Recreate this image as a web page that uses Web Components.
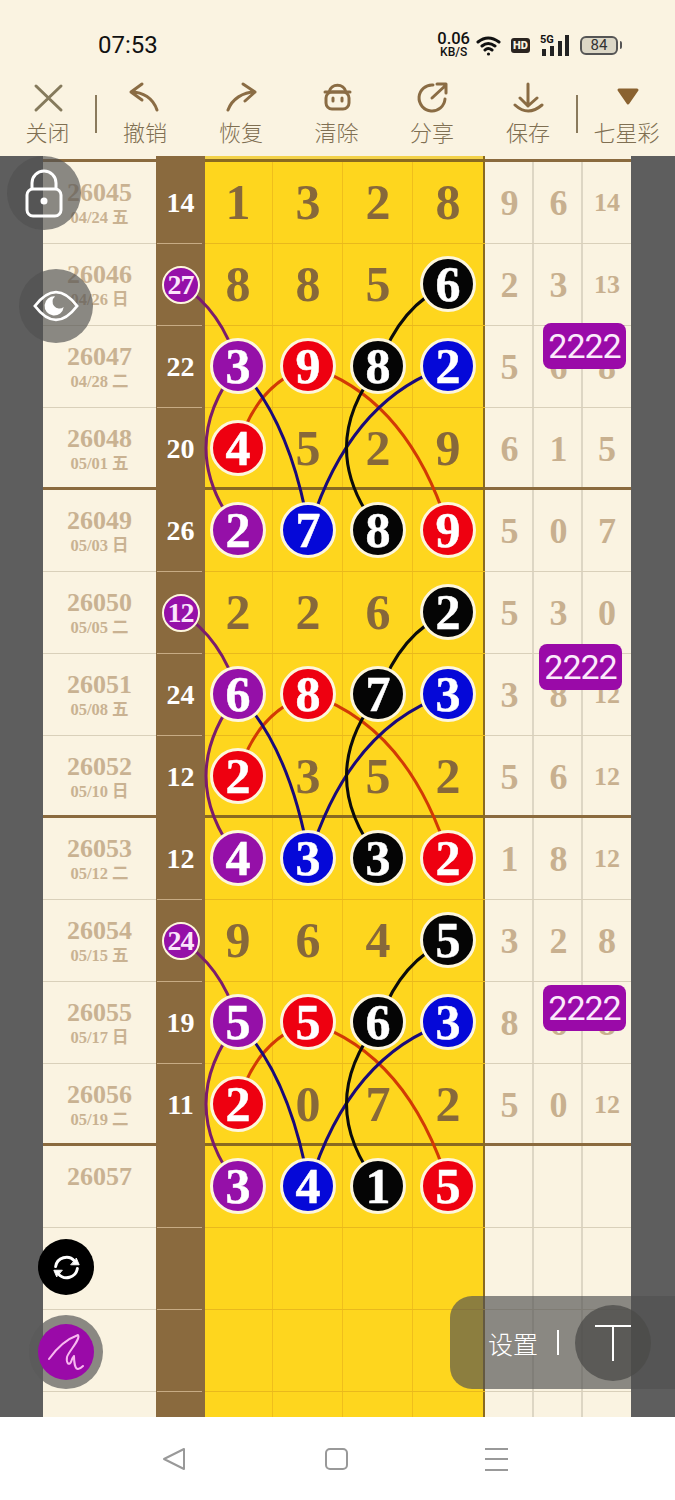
<!DOCTYPE html>
<html lang="zh">
<head>
<meta charset="utf-8">
<title>七星彩</title>
<style>
    html, body { margin: 0; padding: 0; }
    body {
        width: 675px;
        height: 1500px;
        overflow: hidden;
        display: flex;
        flex-direction: column;
        background: #faf3e1;
        font-family: "Noto Sans CJK SC", "Noto Sans", sans-serif;
    }
</style>
</head>
<body>
    <status-bar></status-bar>
    <tool-bar>
        <tool-item label="关闭">
            <svg width="40" height="36" viewBox="0 0 40 36" fill="none" stroke="#857a5c" stroke-width="3" stroke-linecap="round"><path d="M8 6 L33 30 M33 6 L8 30"/></svg>
        </tool-item>
        <tool-rule></tool-rule>
        <tool-item label="撤销">
            <svg width="40" height="36" viewBox="0 0 40 36" fill="none" stroke="#8a6c44" stroke-width="3" stroke-linecap="round" stroke-linejoin="round"><path d="M17 4 L6 12 L17 20 M6 12 C18 12 28 18 32 30"/></svg>
        </tool-item>
        <tool-item label="恢复">
            <svg width="40" height="36" viewBox="0 0 40 36" fill="none" stroke="#8a6c44" stroke-width="3" stroke-linecap="round" stroke-linejoin="round"><path d="M22 4 L34 12 L24 21 M34 12 C22 12 11 19 7 30"/></svg>
        </tool-item>
        <tool-item label="清除">
            <svg width="40" height="36" viewBox="0 0 40 36" fill="none" stroke="#8a6c44" stroke-width="3" stroke-linecap="round"><rect x="9" y="12" width="23" height="17" rx="6"/><path d="M8 12 H33 M12 12 C14 3 27 3 29 12 M16 18 V21 M25 18 V21"/></svg>
        </tool-item>
        <tool-item label="分享">
            <svg width="40" height="36" viewBox="0 0 40 36" fill="none" stroke="#8a6c44" stroke-width="3" stroke-linecap="round" stroke-linejoin="round"><path d="M21 5 A13 13 0 1 0 33 19 M20 18 L34 5 M25 4 H34 V13"/></svg>
        </tool-item>
        <tool-item label="保存">
            <svg width="40" height="36" viewBox="0 0 40 36" fill="none" stroke="#8a6c44" stroke-width="3" stroke-linecap="round" stroke-linejoin="round"><path d="M20 4 V26 M12 18 L20 26 L29 18 M7 25 Q20 37 34 25"/></svg>
        </tool-item>
        <tool-rule></tool-rule>
        <tool-item label="七星彩">
            <svg width="40" height="36" viewBox="0 0 40 36"><path d="M12 10 H30 L21 23 Z" fill="#8a6230" stroke="#8a6230" stroke-width="3" stroke-linejoin="round"/></svg>
        </tool-item>
    </tool-bar>
    <draw-board></draw-board>
    <nav-bar></nav-bar>

<script>
class StatusBar extends HTMLElement {
    constructor() {
        super();
        this.attachShadow({ mode: "open" }).innerHTML = `
            <style>
                :host {
                    display: flex;
                    align-items: center;
                    height: 30px;
                    padding: 30px 53px 15px 98px;
                    font-family: Roboto, "Liberation Sans", sans-serif;
                    color: #111;
                }
                .time { font-size: 24px; margin-right: auto; }
                .speed { display: flex; flex-direction: column; align-items: center; margin-right: 6px; }
                .speed b { font-size: 16.5px; line-height: 14px; font-weight: 500; }
                .speed span { font-size: 12px; line-height: 12px; font-weight: 500; }
                .hd {
                    width: 19px; height: 15px; margin: 0 10px 0 9px;
                    background: #2a2420; color: #faf3e1; border-radius: 3px;
                    font-size: 11px; font-weight: 900; line-height: 15px; text-align: center;
                }
                .net { position: relative; width: 29px; height: 21px; margin-right: 11px; }
                .net span { position: absolute; left: 0; top: -1px; font-size: 11px; line-height: 11px; font-weight: 700; }
                .battery {
                    width: 34px; height: 15px;
                    border: 2px solid #555; border-radius: 6px;
                    background: #dcd7c6; color: #333;
                    font-size: 15px; line-height: 15px; text-align: center;
                }
                .nub { width: 2px; height: 8px; background: #555; margin-left: 2px; border-radius: 0 2px 2px 0; }
            </style>
            <span class="time">07:53</span>
            <span class="speed"><b>0.06</b><span>KB/S</span></span>
            <svg width="26" height="21" viewBox="0 0 26 21" fill="none" stroke="#111" stroke-width="3" stroke-linecap="round">
                <path d="M2 7 Q12 -1 23 7 M6 11 Q12 6 19 11 M9 15 Q12 12 16 15"/>
                <circle cx="12.5" cy="19" r="1.6" fill="#111" stroke="none"/>
            </svg>
            <span class="hd">HD</span>
            <span class="net">
                <span>5G</span>
                <svg width="29" height="21" viewBox="0 0 29 21" fill="#222">
                    <rect x="2" y="14" width="4" height="7"/><rect x="10" y="11" width="4" height="10"/>
                    <rect x="18" y="6" width="4" height="15"/><rect x="25" y="0" width="4" height="21"/>
                </svg>
            </span>
            <span class="battery">84</span>
            <span class="nub"></span>
        `;
    }
}

class ToolBar extends HTMLElement {
    constructor() {
        super();
        this.attachShadow({ mode: "open" }).innerHTML = `
            <style>
                :host {
                    display: grid;
                    grid-template-columns: 95px 2px 96px 96px 95px 96px 96px 2px 97px;
                    height: 81px;
                }
            </style>
            <slot></slot>
        `;
    }
}

class ToolItem extends HTMLElement {
    constructor() {
        super();
        this.attachShadow({ mode: "open" }).innerHTML = `
            <style>
                :host {
                    display: flex;
                    flex-direction: column;
                    align-items: center;
                    padding-top: 5px;
                    color: #7f6f52;
                    font-size: 22px;
                    font-weight: 300;
                    white-space: nowrap;
                }
                .label { line-height: 32px; margin-top: -1px; }
                ::slotted(svg) { display: block; }
            </style>
            <slot></slot>
            <span class="label">${this.getAttribute("label")}</span>
        `;
    }
}

class ToolRule extends HTMLElement {
    constructor() {
        super();
        this.attachShadow({ mode: "open" }).innerHTML = `
            <style>
                :host { display: block; height: 38px; margin-top: 20px; background: #8a7a5c; }
            </style>
        `;
    }
}

class DrawBall extends HTMLElement {
    constructor() {
        super();
        const colors = { p: "#9510a8", r: "#ee0010", k: "#050505", b: "#0508d8" };
        const small = this.hasAttribute("small");
        this.attachShadow({ mode: "open" }).innerHTML = `
            <style>
                :host {
                    position: relative;
                    z-index: 2;
                    display: flex;
                    align-items: center;
                    justify-content: center;
                    box-sizing: border-box;
                    width: ${small ? 38 : 56}px;
                    height: ${small ? 38 : 56}px;
                    border: ${small ? 2 : 3}px solid #fdf6dc;
                    border-radius: 50%;
                    background: ${colors[this.getAttribute("color")]};
                    color: ${small ? "#fbe4fb" : "#fff"};
                    font-size: ${small ? 28 : 50}px;
                    letter-spacing: ${small ? -1 : 0}px;
                    font-weight: 700;
                    -webkit-text-stroke: ${small ? 0 : 0.5}px currentColor;
                }
            </style>
            <slot></slot>
        `;
    }
}

class DrawRow extends HTMLElement {
    constructor() {
        super();
        const nums = JSON.parse(this.getAttribute("nums") || "[]");
        const extra = JSON.parse(this.getAttribute("extra") || "[]");
        const sum = this.getAttribute("sum") || "";
        const mark = this.getAttribute("mark");

        let numCells = "";
        for (let i = 0; i < 4; i++) {
            const n = String(nums[i] ?? "");
            // "3p" is a ball, plain "3" is a number on the yellow
            const inner = n.length > 1 ? `<draw-ball color="${n[1]}">${n[0]}</draw-ball>` : n;
            numCells += `<div class="cell num">${inner}</div>`;
        }
        let extraCells = "";
        for (let i = 0; i < 3; i++) {
            const e = String(extra[i] ?? "");
            extraCells += `<div class="cell extra ${e.length > 1 ? "two" : ""}">${e}</div>`;
        }

        this.attachShadow({ mode: "open" }).innerHTML = `
            <style>
                :host {
                    display: grid;
                    grid-template-columns: 113px 49px 68px 70px 70px 72px 49px 49px 48px;
                    height: 82px;
                    --rule-h: 1px;
                    --thick: #d9d0ba;
                    --thick-y: #e9b91c;
                    --thick-s: #c7ab84;
                    font-family: "Liberation Serif", "Noto Sans CJK SC", serif;
                    font-weight: 700;
                }
                :host([thick]) {
                    --rule-h: 3px;
                    --thick: #8a6a3e;
                    --thick-y: #8a6a20;
                    --thick-s: #8a6a3e;
                }
                .cell {
                    display: flex;
                    align-items: center;
                    justify-content: center;
                    box-sizing: border-box;
                }
                .issue {
                    flex-direction: column;
                    color: #c9b292;
                    background:
                        linear-gradient(var(--thick), var(--thick)) left bottom / 100% var(--rule-h) no-repeat,
                        #faf3e1;
                }
                .issue b { font-size: 26px; line-height: 28px; }
                .issue span { font-size: 16.5px; line-height: 21px; min-height: 21px; }
                .sum {
                    color: #fff;
                    font-size: 28px;
                    background:
                        linear-gradient(var(--thick-s), var(--thick-s)) left 1px bottom / 45px 1px no-repeat,
                        #8a6a3e;
                }
                .num {
                    color: #87683a;
                    font-size: 50px;
                    padding-bottom: 2px;
                    background:
                        linear-gradient(var(--thick-y), var(--thick-y)) left bottom / 100% var(--rule-h) no-repeat,
                        linear-gradient(#efbe1c, #efbe1c) right top / 1px 100% no-repeat,
                        #fed61e;
                }
                /* the style tag is child 1, so the yellow cells are children 4 to 7 */
                .num:nth-child(4) { padding-right: 2px; }
                .num:nth-child(7) {
                    padding-right: 2px;
                    background:
                        linear-gradient(var(--thick-y), var(--thick-y)) left bottom / 100% var(--rule-h) no-repeat,
                        linear-gradient(#8a6a20, #8a6a20) right top / 2px 100% no-repeat,
                        #fed61e;
                }
                .extra {
                    color: #c8b08f;
                    font-size: 36px;
                    padding-bottom: 1px;
                    background:
                        linear-gradient(var(--thick), var(--thick)) left bottom / 100% var(--rule-h) no-repeat,
                        linear-gradient(#ddd6c4, #ddd6c4) right top / 2px 100% no-repeat,
                        #faf3e1;
                }
                .extra.two { font-size: 26px; }
                .extra:last-child {
                    background:
                        linear-gradient(var(--thick), var(--thick)) left bottom / 100% var(--rule-h) no-repeat,
                        #faf3e1;
                }
            </style>
            <div class="cell issue"><b>${this.getAttribute("issue") || ""}</b><span>${this.getAttribute("date") || ""}</span></div>
            <div class="cell sum">${mark ? `<draw-ball small color="p">${mark}</draw-ball>` : sum}</div>
            ${numCells}
            ${extraCells}
        `;
    }
}

class LinkLines extends HTMLElement {
    constructor() {
        super();
        // one group of curves, repeated every four draws
        const group = `
            <path stroke="#7b1c6c" d="M180 284 Q222 310 238 366"/>
            <path stroke="#7b1c6c" d="M238 366 Q174 448 238 530"/>
            <path stroke="#d23a05" d="M309 366 Q255 385 238 448"/>
            <path stroke="#d23a05" d="M309 366 Q408 398 449 530"/>
            <path stroke="#1a0a7a" d="M238 366 Q290 420 309 530"/>
            <path stroke="#1a0a7a" d="M449 366 Q350 398 309 530"/>
            <path stroke="#0c0c0c" d="M449 284 Q400 305 379 366"/>
            <path stroke="#0c0c0c" d="M379 366 Q314 448 379 530"/>
        `;
        this.attachShadow({ mode: "open" }).innerHTML = `
            <style>
                :host { position: absolute; left: 0; top: 0; z-index: 1; display: block; }
                svg { display: block; }
            </style>
            <svg width="675" height="1261" viewBox="0 156 675 1261" fill="none" stroke-width="3">
                <g>${group}</g>
                <g transform="translate(0 328)">${group}</g>
                <g transform="translate(0 656)">${group}</g>
            </svg>
        `;
    }
}

class FloatControls extends HTMLElement {
    constructor() {
        super();
        this.attachShadow({ mode: "open" }).innerHTML = `
            <style>
                :host { position: absolute; left: 0; top: 0; z-index: 3; width: 675px; height: 1261px; }
                .round {
                    position: absolute;
                    display: flex;
                    align-items: center;
                    justify-content: center;
                    border-radius: 50%;
                    background: rgba(80, 80, 80, .66);
                }
                .lock { left: 7px; top: 0; width: 74px; height: 74px; }
                .eye { left: 19px; top: 113px; width: 74px; height: 74px; }
                .sync { left: 38px; top: 1083px; width: 56px; height: 56px; background: #000; }
                .ring { left: 29px; top: 1159px; width: 74px; height: 74px; background: rgba(90, 90, 90, .7); }
                .pen {
                    display: flex; align-items: center; justify-content: center;
                    width: 56px; height: 56px; border-radius: 50%; background: #9a0aa8;
                }
                .tag {
                    position: absolute;
                    display: flex;
                    align-items: center;
                    justify-content: center;
                    width: 83px;
                    height: 46px;
                    border-radius: 8px;
                    background: #9a0aa8;
                    color: #fbe9fb;
                    font-family: Roboto, "Liberation Sans", sans-serif;
                    font-size: 34px;
                    letter-spacing: -1px;
                }
                .panel {
                    position: absolute;
                    left: 450px;
                    top: 1140px;
                    width: 225px;
                    height: 93px;
                    box-sizing: border-box;
                    padding-left: 38px;
                    display: flex;
                    align-items: center;
                    border-radius: 22px 0 0 22px;
                    background: rgba(80, 80, 80, .66);
                    color: #fff;
                    font-size: 25px;
                    font-weight: 300;
                }
                .sep { width: 2px; height: 25px; margin: 0 16px 0 19px; background: #fff; }
                .t {
                    display: flex; align-items: center; justify-content: center;
                    width: 76px; height: 76px; border-radius: 50%;
                    background: rgba(75, 75, 72, .75);
                }
            </style>
            <div class="round lock">
                <svg width="40" height="50" viewBox="0 0 40 50" fill="none" stroke="#fff" stroke-width="3">
                    <path d="M8 21 V15 A12 12 0 0 1 32 15 V21"/>
                    <rect x="3" y="21" width="34" height="27" rx="6"/>
                    <circle cx="20" cy="33" r="3.5" fill="#fff" stroke="none"/>
                </svg>
            </div>
            <div class="round eye">
                <svg width="46" height="34" viewBox="0 0 48 34" fill="none" stroke="#fff" stroke-width="3">
                    <path d="M2 17 Q24 -12 46 17 Q24 46 2 17 Z"/>
                    <path d="M24 7 A10 10 0 1 0 33 18 A6 6 0 0 1 24 7 Z" fill="#fff" stroke="none" transform="translate(-1 0)"/>
                </svg>
            </div>
            <div class="round sync">
                <svg width="29" height="29" viewBox="0 0 32 32" fill="none" stroke="#fff" stroke-width="3.2" stroke-linecap="round">
                    <path d="M4 15 A12 12 0 0 1 25 9"/>
                    <path d="M28 17 A12 12 0 0 1 7 23"/>
                    <path d="M21 13 L30 13 L27 6 Z" fill="#fff" stroke-width="1"/>
                    <path d="M11 19 L2 19 L5 26 Z" fill="#fff" stroke-width="1"/>
                </svg>
            </div>
            <div class="round ring">
                <span class="pen">
                    <svg width="38" height="38" viewBox="0 0 38 38" fill="none" stroke="#f8b8f0" stroke-width="2" stroke-linecap="round" stroke-linejoin="round">
                        <path d="M2 26 C9 16 20 6 31 2 C34 6 22 18 20 24 C19 30 22 33 24 29 C25 26 26 24 27 23 C27 28 28 36 31 36 C33 36 35 34 36 33"/>
                    </svg>
                </span>
            </div>
            <div class="tag" style="left:543px;top:167px">2222</div>
            <div class="tag" style="left:539px;top:488px">2222</div>
            <div class="tag" style="left:543px;top:829px">2222</div>
            <div class="panel">
                <span>设置</span>
                <span class="sep"></span>
                <span class="t">
                    <svg width="40" height="38" viewBox="0 0 40 38" fill="none" stroke="#fff" stroke-width="2"><path d="M2 2 H38 M20 2 V37"/></svg>
                </span>
            </div>
        `;
    }
}

class DrawBoard extends HTMLElement {
    connectedCallback() {
        const draws = [
            ["26045", "04/24 五", "14", "", [1, 3, 2, 8], [9, 6, 14]],
            ["26046", "04/26 日", "", "27", [8, 8, 5, "6k"], [2, 3, 13]],
            ["26047", "04/28 二", "22", "", ["3p", "9r", "8k", "2b"], [5, 6, 8]],
            ["26048", "05/01 五", "20", "", ["4r", 5, 2, 9], [6, 1, 5]],
            ["26049", "05/03 日", "26", "", ["2p", "7b", "8k", "9r"], [5, 0, 7]],
            ["26050", "05/05 二", "", "12", [2, 2, 6, "2k"], [5, 3, 0]],
            ["26051", "05/08 五", "24", "", ["6p", "8r", "7k", "3b"], [3, 8, 12]],
            ["26052", "05/10 日", "12", "", ["2r", 3, 5, 2], [5, 6, 12]],
            ["26053", "05/12 二", "12", "", ["4p", "3b", "3k", "2r"], [1, 8, 12]],
            ["26054", "05/15 五", "", "24", [9, 6, 4, "5k"], [3, 2, 8]],
            ["26055", "05/17 日", "19", "", ["5p", "5r", "6k", "3b"], [8, 6, 8]],
            ["26056", "05/19 二", "11", "", ["2r", 0, 7, 2], [5, 0, 12]],
            ["26057", "", "", "", ["3p", "4b", "1k", "5r"], []],
            ["", "", "", "", [], []],
            ["", "", "", "", [], []],
            ["", "", "", "", [], []]
        ];

        let rows = "";
        draws.forEach((d, i) => {
            const thick = i % 4 === 3 && i < 12 ? "thick" : "";
            rows += `<draw-row ${thick} issue="${d[0]}" date="${d[1]}" sum="${d[2]}" mark="${d[3]}"
                nums='${JSON.stringify(d[4])}' extra='${JSON.stringify(d[5])}'></draw-row>`;
        });

        this.attachShadow({ mode: "open" }).innerHTML = `
            <style>
                :host {
                    position: relative;
                    display: block;
                    height: 1261px;
                    overflow: hidden;
                    background: #5e5e5e;
                }
                .sheet { width: 588px; margin-left: 43px; }
                .strip {
                    display: grid;
                    grid-template-columns: 113px 49px 280px 146px;
                    height: 6px;
                }
                .strip div { background: linear-gradient(#8a6a3e, #8a6a3e) left bottom / 100% 3px no-repeat, #faf3e1; }
                .strip .s { background: #8a6a3e; }
                .strip .y {
                    background:
                        linear-gradient(#8a6a20, #8a6a20) left bottom / 100% 3px no-repeat,
                        linear-gradient(#8a6a20, #8a6a20) right top / 2px 100% no-repeat,
                        #f3d24a;
                }
            </style>
            <div class="sheet">
                <div class="strip"><div></div><div class="s"></div><div class="y"></div><div></div></div>
                ${rows}
            </div>
            <link-lines></link-lines>
            <float-controls></float-controls>
        `;
    }
}

class NavBar extends HTMLElement {
    constructor() {
        super();
        this.attachShadow({ mode: "open" }).innerHTML = `
            <style>
                :host {
                    display: flex;
                    align-items: center;
                    gap: 137.5px;
                    box-sizing: border-box;
                    height: 83px;
                    padding: 0 0 0 162px;
                    background: #fff;
                }
                svg { display: block; }
            </style>
            <svg width="24" height="24" viewBox="0 0 24 24" fill="none" stroke="#999" stroke-width="2" stroke-linejoin="round"><path d="M22 2 V22 L2 12 Z"/></svg>
            <svg width="24" height="24" viewBox="0 0 24 24" fill="none" stroke="#999" stroke-width="2"><rect x="2" y="2" width="21" height="20" rx="4"/></svg>
            <svg width="24" height="24" viewBox="0 0 24 24" fill="none" stroke="#999" stroke-width="2"><path d="M0 2 H23 M0 12 H23 M0 23 H23"/></svg>
        `;
    }
}

customElements.define("status-bar", StatusBar);
customElements.define("tool-bar", ToolBar);
customElements.define("tool-item", ToolItem);
customElements.define("tool-rule", ToolRule);
customElements.define("draw-ball", DrawBall);
customElements.define("draw-row", DrawRow);
customElements.define("link-lines", LinkLines);
customElements.define("float-controls", FloatControls);
customElements.define("draw-board", DrawBoard);
customElements.define("nav-bar", NavBar);
</script>
</body>
</html>
